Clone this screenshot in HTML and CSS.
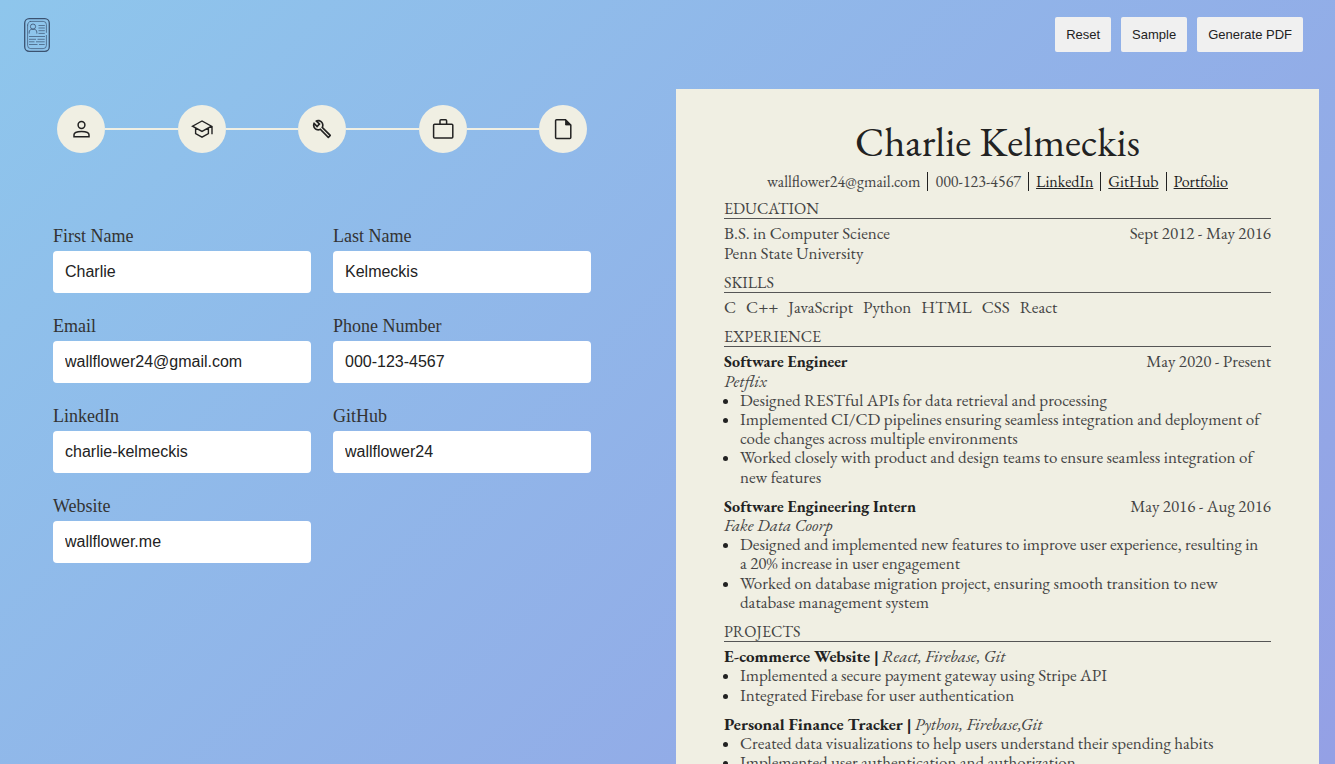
FILE: index.html
```html
<!DOCTYPE html>
<html lang="en">
<head>
<meta charset="utf-8">
<meta name="viewport" content="width=device-width, initial-scale=1">
<title>Resume Builder</title>
<link rel="stylesheet" href="styles.css">
</head>
<body>
<header class="topbar">
  <svg class="logo" viewBox="0 0 26 34" fill="none" stroke="#3b5270" aria-hidden="true">
    <rect x="0.7" y="0.7" width="24.6" height="32.6" rx="4.5" stroke-width="1.3"/>
    <path d="M5.8 3.4h13.4a3.2 3.2 0 0 1 3.2 3.2v8.2M22.4 17v10.4a3.2 3.2 0 0 1-3.2 3.2H6.8a3.2 3.2 0 0 1-3.2-3.2V6.6M3.6 7.6C3.8 5 4.6 3.8 6.8 3.4" stroke-width="0.7"/>
    <circle cx="9" cy="8.6" r="2.6" stroke-width="0.8"/>
    <path d="M5.2 15.6v-1.4c0-2.2 1.4-3 3.8-3s3.8.8 3.8 3v1.4" stroke-width="0.8"/>
    <path d="M14.5 7.5h6.3M14.5 10h6.3M14.5 12.7h6.3M14.5 15.4h6.3M5 18.5h16M5 21.3h7M13.5 21.3h7.2M5 23.8h5.5M12 23.8h8.7M5 26.5h8.5M15 26.5h5.7" stroke-width="0.7"/>
  </svg>
  <div class="actions">
    <button type="button" class="action">Reset</button>
    <button type="button" class="action">Sample</button>
    <button type="button" class="action">Generate PDF</button>
  </div>
</header>
<main class="workspace">
  <section class="editor">
    <nav class="steps" aria-label="Sections">
      <button type="button" class="step" aria-label="Personal">
        <svg class="step-icon" viewBox="0 0 24 24" fill="none" stroke="currentColor" stroke-width="1.5"><circle cx="12.5" cy="8" r="3.4"/><path d="M5 19.8v-2c0-2.3 3.6-3.3 7.5-3.3s7.5 1 7.5 3.3v2z"/></svg>
      </button>
      <span class="step-line"></span>
      <button type="button" class="step" aria-label="Education">
        <svg class="step-icon" viewBox="0 0 24 24" fill="none" stroke="currentColor" stroke-width="1.4"><path d="M12 4L2.5 9.2 12 14.4l9.5-5.2zM5.6 11v5.6L12 20.2l6.4-3.6V11M22 9.2v8"/></svg>
      </button>
      <span class="step-line"></span>
      <button type="button" class="step" aria-label="Skills">
        <svg class="step-icon step-icon-small" viewBox="0 0 24 24" fill="currentColor"><path d="M22.61 18.99l-9.08-9.08c.93-2.34.45-5.1-1.44-7C9.79.61 6.21.4 3.66 2.26L7.5 6.11 6.08 7.52 2.25 3.69C.39 6.23.6 9.82 2.9 12.11c1.86 1.86 4.57 2.35 6.89 1.48l9.11 9.11c.39.39 1.02.39 1.41 0l2.3-2.3c.4-.38.4-1.01 0-1.41zm-3 1.6l-9.46-9.46c-.61.45-1.29.72-2 .82-1.36.2-2.79-.21-3.83-1.25C3.37 9.76 2.93 8.5 3 7.26l3.09 3.09 4.24-4.24-3.09-3.09c1.24-.07 2.49.37 3.44 1.31 1.08 1.08 1.49 2.57 1.24 3.96-.12.71-.42 1.37-.88 1.96l9.45 9.45-.88.89z"/></svg>
      </button>
      <span class="step-line"></span>
      <button type="button" class="step" aria-label="Experience">
        <svg class="step-icon" viewBox="0 0 24 24" fill="none" stroke="currentColor" stroke-width="1.5"><rect x="2.6" y="7.2" width="19.2" height="13.8" rx="1"/><path d="M9 7V3.8a1 1 0 0 1 1-1h4.6a1 1 0 0 1 1 1V7"/></svg>
      </button>
      <span class="step-line"></span>
      <button type="button" class="step" aria-label="Projects">
        <svg class="step-icon" viewBox="0 0 24 24" fill="none" stroke="currentColor" stroke-width="1.5"><path d="M14.5 2.8H5.6a1 1 0 0 0-1 1v16.6a1 1 0 0 0 1 1h13.2a1 1 0 0 0 1-1V8z"/><path d="M14.5 2.8V8h5.3z" fill="currentColor" stroke-width="0.8"/></svg>
      </button>
    </nav>
    <form class="fields">
      <div class="field"><label for="first">First Name</label><input id="first" type="text" value="Charlie"></div>
      <div class="field"><label for="last">Last Name</label><input id="last" type="text" value="Kelmeckis"></div>
      <div class="field"><label for="email">Email</label><input id="email" type="email" value="wallflower24@gmail.com"></div>
      <div class="field"><label for="phone">Phone Number</label><input id="phone" type="tel" value="000-123-4567"></div>
      <div class="field"><label for="linkedin">LinkedIn</label><input id="linkedin" type="text" value="charlie-kelmeckis"></div>
      <div class="field"><label for="github">GitHub</label><input id="github" type="text" value="wallflower24"></div>
      <div class="field"><label for="website">Website</label><input id="website" type="text" value="wallflower.me"></div>
    </form>
  </section>
  <article class="paper">
    <h1 class="name">Charlie Kelmeckis</h1>
    <ul class="contact">
      <li>wallflower24@gmail.com</li>
      <li>000-123-4567</li>
      <li><a href="#linkedin">LinkedIn</a></li>
      <li><a href="#github">GitHub</a></li>
      <li><a href="#website">Portfolio</a></li>
    </ul>
    <section class="block">
      <h2 class="block-title">EDUCATION</h2>
      <div class="entry">
        <div class="entry-head"><span>B.S. in Computer Science</span><span>Sept 2012 - May 2016</span></div>
        <div>Penn State University</div>
      </div>
    </section>
    <section class="block">
      <h2 class="block-title">SKILLS</h2>
      <ul class="skills"><li>C</li><li>C++</li><li>JavaScript</li><li>Python</li><li>HTML</li><li>CSS</li><li>React</li></ul>
    </section>
    <section class="block">
      <h2 class="block-title">EXPERIENCE</h2>
      <div class="entry">
        <div class="entry-head"><h3 class="role">Software Engineer</h3><span>May 2020 - Present</span></div>
        <div class="aside">Petflix</div>
        <ul class="points">
          <li>Designed RESTful APIs for data retrieval and processing</li>
          <li>Implemented CI/CD pipelines ensuring seamless integration and deployment of code changes across multiple environments</li>
          <li>Worked closely with product and design teams to ensure seamless integration of new features</li>
        </ul>
      </div>
      <div class="entry">
        <div class="entry-head"><h3 class="role">Software Engineering Intern</h3><span>May 2016 - Aug 2016</span></div>
        <div class="aside">Fake Data Coorp</div>
        <ul class="points">
          <li>Designed and implemented new features to improve user experience, resulting in a&nbsp;20% increase in user engagement</li>
          <li>Worked on database migration project, ensuring smooth transition to new database management system</li>
        </ul>
      </div>
    </section>
    <section class="block">
      <h2 class="block-title">PROJECTS</h2>
      <div class="entry">
        <div class="project-head"><h3 class="role">E-commerce Website |</h3><span class="aside">React, Firebase, Git</span></div>
        <ul class="points">
          <li>Implemented a secure payment gateway using Stripe API</li>
          <li>Integrated Firebase for user authentication</li>
        </ul>
      </div>
      <div class="entry">
        <div class="project-head"><h3 class="role">Personal Finance Tracker |</h3><span class="aside">Python, Firebase,Git</span></div>
        <ul class="points">
          <li>Created data visualizations to help users understand their spending habits</li>
          <li>Implemented user authentication and authorization</li>
        </ul>
      </div>
    </section>
  </article>
</main>
</body>
</html>
```

FILE: styles.css
```css
* { box-sizing: border-box; }

body {
  margin: 0;
  height: 100vh;
  overflow: hidden;
  display: flex;
  flex-direction: column;
  color: #222;
  font-family: "EB Garamond", "Liberation Serif", serif;
  font-size: 17px;
  line-height: 1.13;
  background: linear-gradient(135deg, #8ec6ec, #94a0e5);
}

h1, h2, h3, ul { margin: 0; padding: 0; font-size: inherit; font-weight: 400; }
ul { list-style: none; }

.topbar {
  display: flex;
  justify-content: space-between;
  align-items: center;
  padding: 17px 32px 17px 24px;
}
.logo { width: 26px; height: 34px; }
.actions { display: flex; gap: 10px; }
.action {
  height: 35px;
  padding: 0 11px;
  border: 0;
  border-radius: 2px;
  background: #f0f0f0;
  color: #222;
  font: 13px "Liberation Sans", Arial, sans-serif;
}

.workspace {
  flex: 1;
  min-height: 0;
  display: grid;
  grid-template-columns: 1fr 1fr;
  gap: 33px;
  padding: 20px 16px 0 0;
}

.editor { padding: 16px 52px 0 53px; }
.steps { display: flex; align-items: center; padding: 0 4px; }
.step {
  display: flex;
  align-items: center;
  justify-content: center;
  width: 48px;
  height: 48px;
  padding: 0;
  border: 0;
  border-radius: 50%;
  background: #f0efe3;
  color: #222;
}
.step-icon { width: 24px; height: 24px; }
.step-icon-small { width: 20px; height: 20px; }
.step-line { flex: 1; height: 2px; background: #f0efe3; }

.fields {
  display: grid;
  grid-template-columns: 1fr 1fr;
  gap: 22px;
  margin-top: 72px;
}
.field { display: flex; flex-direction: column; gap: 4px; min-width: 0; }
.field label {
  color: #333;
  font: 18px/22px "Liberation Serif", "Times New Roman", serif;
}
.field input {
  width: 100%;
  height: 42px;
  padding: 0 12px;
  border: 0;
  border-radius: 4px;
  background: #fff;
  color: #222;
  font: 16px "Liberation Sans", Arial, sans-serif;
}

.paper {
  align-self: start;
  padding: 30px 48px;
  background: #f0efe3;
  color: #444;
}
.name { font-size: 41px; line-height: 46px; text-align: center; color: #222; }
.contact { display: flex; justify-content: center; margin: 7px 0 8px; font-size: 16px; line-height: 1.2; }
.contact li + li { margin-left: 7px; padding-left: 7px; border-left: 1px solid #222; }
.contact a { color: #222; }

.block { margin-bottom: 10px; }
.block-title { margin-bottom: 5px; border-bottom: 1px solid #555; font-size: 16px; line-height: 1.2; }
.entry + .entry { margin-top: 10px; }
.entry-head { display: flex; justify-content: space-between; align-items: baseline; }
.entry-head .role { font-size: 16px; }
.project-head { display: flex; gap: 3px; }
.role { font-weight: 700; color: #222; }
.aside { font-style: italic; }
.skills { display: flex; gap: 10px; }
.points { padding-left: 16px; list-style: disc; }
.points li::marker { color: #222; font-size: 16px; }
```
